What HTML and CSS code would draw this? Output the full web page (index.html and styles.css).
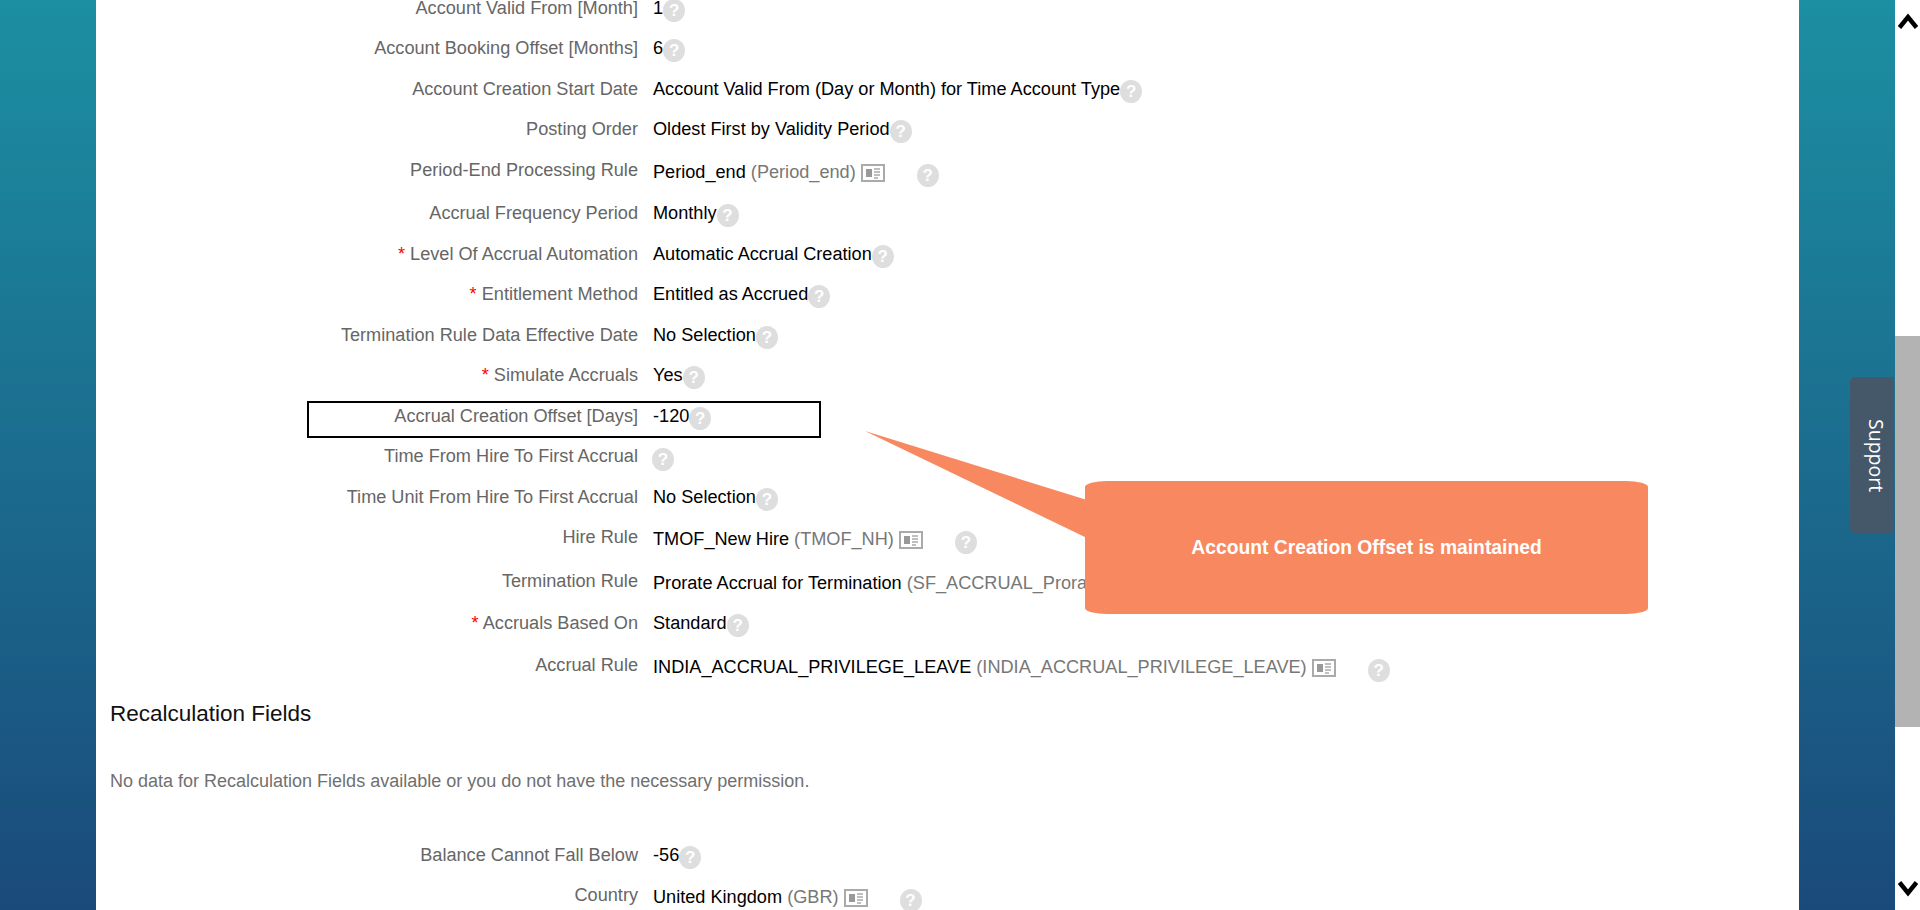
FILE: index.html
```html
<!DOCTYPE html>
<html lang="en">
<head>
<meta charset="utf-8">
<title>Time Account Type</title>
<link rel="stylesheet" href="styles.css">
</head>
<body>
<div class="page">
  <div class="canvas">
    <main class="panel">
      <div class="form">
        <div class="row row-first"><div class="label">Account Valid From [Month]</div><div class="val">1<span class="help">?</span></div></div>
        <div class="row row-odd"><div class="label">Account Booking Offset [Months]</div><div class="val">6<span class="help">?</span></div></div>
        <div class="row"><div class="label">Account Creation Start Date</div><div class="val">Account Valid From (Day or Month) for Time Account Type<span class="help">?</span></div></div>
        <div class="row row-odd"><div class="label">Posting Order</div><div class="val">Oldest First by Validity Period<span class="help">?</span></div></div>
        <div class="row row-ref"><div class="label">Period-End Processing Rule</div><div class="val val-ref"><span>Period_end <span class="code">(Period_end)</span></span><svg class="card" viewBox="0 0 24 18"><rect x="1" y="1" width="22" height="16" fill="#fff" stroke="#aaa" stroke-width="2"/><rect x="5" y="5" width="6" height="8" fill="#999"/><path d="M13 5h6M13 8h6M13 11h6M13 14h4" stroke="#aaa" stroke-width="1.4"/></svg><span class="help help-ref">?</span></div></div>
        <div class="row row-odd"><div class="label">Accrual Frequency Period</div><div class="val">Monthly<span class="help">?</span></div></div>
        <div class="row"><div class="label"><span class="req">*</span> Level Of Accrual Automation</div><div class="val">Automatic Accrual Creation<span class="help">?</span></div></div>
        <div class="row row-odd"><div class="label"><span class="req">*</span> Entitlement Method</div><div class="val">Entitled as Accrued<span class="help">?</span></div></div>
        <div class="row"><div class="label">Termination Rule Data Effective Date</div><div class="val">No Selection<span class="help">?</span></div></div>
        <div class="row row-odd"><div class="label"><span class="req">*</span> Simulate Accruals</div><div class="val">Yes<span class="help">?</span></div></div>
        <div class="row"><div class="label">Accrual Creation Offset [Days]</div><div class="val">-120<span class="help">?</span></div></div>
        <div class="row row-odd"><div class="label">Time From Hire To First Accrual</div><div class="val"><span class="help help-empty">?</span></div></div>
        <div class="row"><div class="label">Time Unit From Hire To First Accrual</div><div class="val">No Selection<span class="help">?</span></div></div>
        <div class="row row-hire"><div class="label">Hire Rule</div><div class="val val-ref"><span>TMOF_New Hire <span class="code">(TMOF_NH)</span></span><svg class="card" viewBox="0 0 24 18"><rect x="1" y="1" width="22" height="16" fill="#fff" stroke="#aaa" stroke-width="2"/><rect x="5" y="5" width="6" height="8" fill="#999"/><path d="M13 5h6M13 8h6M13 11h6M13 14h4" stroke="#aaa" stroke-width="1.4"/></svg><span class="help help-ref">?</span></div></div>
        <div class="row row-term"><div class="label">Termination Rule</div><div class="val val-ref"><span>Prorate Accrual for Termination <span class="code">(SF_ACCRUAL_Prorate)</span></span></div></div>
        <div class="row row-term"><div class="label"><span class="req">*</span> Accruals Based On</div><div class="val">Standard<span class="help">?</span></div></div>
        <div class="row"><div class="label">Accrual Rule</div><div class="val val-ref"><span>INDIA_ACCRUAL_PRIVILEGE_LEAVE <span class="code">(INDIA_ACCRUAL_PRIVILEGE_LEAVE)</span></span><svg class="card" viewBox="0 0 24 18"><rect x="1" y="1" width="22" height="16" fill="#fff" stroke="#aaa" stroke-width="2"/><rect x="5" y="5" width="6" height="8" fill="#999"/><path d="M13 5h6M13 8h6M13 11h6M13 14h4" stroke="#aaa" stroke-width="1.4"/></svg><span class="help help-ref">?</span></div></div>
      </div>
      <h2 class="section-title">Recalculation Fields</h2>
      <p class="no-data">No data for Recalculation Fields available or you do not have the necessary permission.</p>
      <div class="form">
        <div class="row"><div class="label">Balance Cannot Fall Below</div><div class="val">-56<span class="help">?</span></div></div>
        <div class="row"><div class="label">Country</div><div class="val val-ref"><span>United Kingdom <span class="code">(GBR)</span></span><svg class="card" viewBox="0 0 24 18"><rect x="1" y="1" width="22" height="16" fill="#fff" stroke="#aaa" stroke-width="2"/><rect x="5" y="5" width="6" height="8" fill="#999"/><path d="M13 5h6M13 8h6M13 11h6M13 14h4" stroke="#aaa" stroke-width="1.4"/></svg><span class="help help-ref">?</span></div></div>
      </div>
    </main>
  </div>
  <aside class="scrollbar">
    <svg class="chev chev-up" viewBox="0 0 20 16"><polyline points="1.5,14.5 10,4 18.5,14.5" fill="none" stroke="#000" stroke-width="4.4"/></svg>
    <div class="thumb"></div>
    <svg class="chev chev-down" viewBox="0 0 20 16"><polyline points="1.5,1.5 10,12 18.5,1.5" fill="none" stroke="#000" stroke-width="4.4"/></svg>
  </aside>
  <div class="highlight"></div>
  <div class="callout">
    <svg class="tail" viewBox="0 0 222 107"><polygon points="0,0 222,69 222,107" fill="#f78860"/></svg>
    <span class="callout-text">Account Creation Offset is maintained</span>
  </div>
  <div class="support"><span>Support</span></div>
</div>
</body>
</html>
```
FILE: styles.css
```css
* { box-sizing: border-box; }
html, body { margin: 0; height: 100%; overflow: hidden; }
body { font-family: "Liberation Sans", Arial, sans-serif; font-size: 18.15px; line-height: 20px; color: #000; background: #fff; }
.page { position: relative; display: flex; height: 910px; overflow: hidden; }
.canvas { flex: 1; padding: 0 96px; background: linear-gradient(180deg, #1c8fa2 0%, #1a4a7a 100%); overflow: hidden; }
.panel { height: 100%; background: #fff; overflow: hidden; }
.row { display: grid; grid-template-columns: 542px 1fr; column-gap: 15px; height: 40px; }
.row-odd { height: 41px; }
.row-first { height: 38px; line-height: 16px; }
.row-first .help { margin-top: -1px; }
.row-ref { height: 43px; }
.row-hire { height: 44px; }
.row-term { height: 42px; }
.label { text-align: right; color: #666; white-space: nowrap; }
.req { color: #f00; }
.val { display: flex; align-items: flex-start; white-space: nowrap; }
.val-ref > span:first-child { padding-top: 2px; }
.code { color: #777; }
.help { flex: none; width: 22px; height: 23px; margin-top: 1px; border-radius: 50%; background: #dedede; color: #fff; font-size: 17px; font-weight: 700; line-height: 23px; text-align: center; }
.help-ref { margin-top: 4px; margin-left: 32px; }
.help-empty { margin-top: 2px; margin-left: -1px; }
.card { flex: none; width: 24px; height: 18px; margin-top: 4px; margin-left: 5px; }
.section-title { margin: 5px 0 0 14px; font-size: 22.5px; font-weight: 400; line-height: 28px; color: #111; }
.no-data { margin: 43px 0 0 14px; color: #707070; font-size: 18px; }
.no-data + .form { margin-top: 54px; }
.scrollbar { flex: none; width: 25px; display: flex; flex-direction: column; align-items: center; background: #fff; }
.chev { flex: none; width: 20px; height: 16px; }
.chev-up { margin-top: 13px; }
.thumb { flex: none; align-self: stretch; height: 391px; margin-top: 307px; background: #b3b3b3; }
.chev-down { margin-top: 154px; }
.highlight { position: absolute; left: 307px; top: 401px; width: 514px; height: 37px; border: 2px solid #000; }
.callout { position: absolute; left: 1085px; top: 481px; width: 563px; height: 133px; display: flex; align-items: center; justify-content: center; background: #f78860; border-radius: 22px / 6px; }
.callout-text { color: #fff; font-size: 19.3px; font-weight: 700; }
.tail { position: absolute; left: -220px; top: -50px; width: 222px; height: 107px; }
.support { position: absolute; left: 1850px; top: 377px; width: 44px; height: 156px; display: flex; align-items: center; justify-content: center; background: #44586a; border-radius: 5px 0 0 5px; color: #fff; font-family: "Open Sans", sans-serif; font-size: 19.5px; }
.support span { writing-mode: vertical-rl; padding-left: 8px; padding-top: 2px; }
```
